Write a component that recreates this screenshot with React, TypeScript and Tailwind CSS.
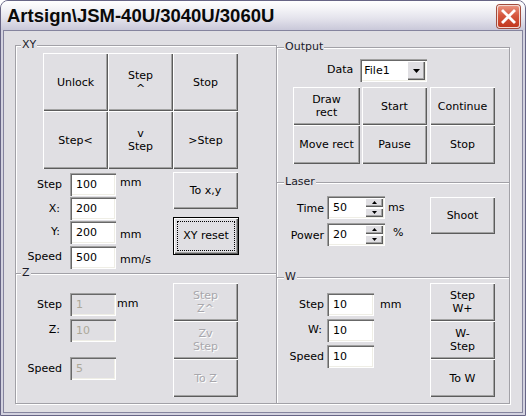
import React from 'react';

const raised =
  'bg-[#e0dfe3] shadow-[inset_1px_1px_0_#ffffff,inset_-1px_-1px_0_#5c5c5c,inset_-2px_-2px_0_#a3a3a3]';
const sunken =
  'shadow-[inset_1px_1px_0_#a0a0a0,inset_2px_2px_0_#686868,inset_-1px_-1px_0_#ffffff,inset_-2px_-2px_0_#efeee6]';

function Btn({
  className,
  children,
  disabled,
}: {
  className: string;
  children: React.ReactNode;
  disabled?: boolean;
}) {
  return (
    <div
      className={`${raised} ${className} flex flex-col items-center justify-center text-center leading-[13px] ${
        disabled ? 'text-[#a8a7ac] [text-shadow:1px_1px_0_#ffffff]' : 'text-black'
      }`}
    >
      {children}
    </div>
  );
}

function Field({ className, value, disabled }: { className: string; value: string; disabled?: boolean }) {
  return (
    <div
      className={`${sunken} ${className} h-[23px] flex items-center pl-[6px] pt-[1px] ${
        disabled ? 'bg-[#e0dfe3] text-[#aca899]' : 'bg-white text-black'
      }`}
    >
      {value}
    </div>
  );
}

function Group({
  label,
  className,
  labelPos,
  children,
}: {
  label: string;
  className: string;
  labelPos: string;
  children: React.ReactNode;
}) {
  return (
    <div
      className={`relative border border-[#a2a1a7] shadow-[inset_1px_1px_0_#ffffff,1px_1px_0_#ffffff] ${className}`}
    >
      <span className={`absolute top-[-8px] ${labelPos} px-[1px] bg-[#e0dfe3] leading-[13px] text-[#1b1b2a]`}>
        {label}
      </span>
      {children}
    </div>
  );
}

function Arrow({ up }: { up?: boolean }) {
  return (
    <svg width="5" height="3" viewBox="0 0 5 3">
      <polygon points={up ? '2.5,0 5,3 0,3' : '0,0 5,0 2.5,3'} fill="#000" />
    </svg>
  );
}

function Spin({ value }: { value: string }) {
  return (
    <div className={`${sunken} bg-white w-[58px] h-[23px] flex`}>
      <span className="flex-1 pl-[6px] pt-[4px]">{value}</span>
      <div className="mt-[2px] mr-[2px] flex flex-col gap-[1px]">
        <div className={`${raised} w-[18px] h-[9px] flex items-center justify-center`}>
          <Arrow up />
        </div>
        <div className={`${raised} w-[18px] h-[9px] flex items-center justify-center`}>
          <Arrow />
        </div>
      </div>
    </div>
  );
}

export default function App() {
  return (
    <div className="w-[526px] h-[416px] bg-white font-['DejaVu_Sans',sans-serif] text-[11px] text-black">
      <div className="w-full h-full rounded-t-[8px] border border-[#676585] bg-[#d3d2df] flex flex-col overflow-hidden">
        {/* title bar */}
        <div className="h-[29px] shrink-0 flex items-center pl-[6px] pr-[5px] bg-[linear-gradient(to_bottom,#ffffff_0%,#f5f5f8_25%,#e4e3ec_60%,#c9c8d9_100%)]">
          <span className="flex-1 font-['Liberation_Sans',Arial,sans-serif] font-bold text-[18.5px] leading-[22px] text-[#0a0a0a] pt-[1px]">
            Artsign\JSM-40U/3040U/3060U
          </span>
          <div className="mt-[2px] w-[23px] h-[23px] rounded-[3px] border border-[#f3d9d2] bg-[linear-gradient(to_bottom,#e9927f_0%,#d6583f_45%,#c2381f_100%)] shadow-[0_0_0_1px_#a24b3c] flex items-center justify-center">
            <svg width="21" height="21" viewBox="0 0 21 21">
              <path d="M5 5 L16 16 M16 5 L5 16" stroke="#ffffff" strokeWidth="2.8" strokeLinecap="square" />
            </svg>
          </div>
        </div>

        {/* client */}
        <div className="flex-1 mx-[2px] mb-[2px] border border-[#85849e] bg-[#e0dfe3] pl-[11px] pt-[14px] flex items-start">
          {/* left column */}
          <div className="w-[262px] flex flex-col">
            <Group label="XY" className="h-[229px]" labelPos="left-[5px]">
              <div className="ml-[27px] mt-[7px] grid grid-cols-[65px_65px_65px] grid-rows-[58px_58px]">
                <Btn className="">Unlock</Btn>
                <Btn className="">
                  <span>Step</span>
                  <span>^</span>
                </Btn>
                <Btn className="">Stop</Btn>
                <Btn className="">Step&lt;</Btn>
                <Btn className="">
                  <span>v</span>
                  <span>Step</span>
                </Btn>
                <Btn className="">&gt;Step</Btn>
              </div>
              <div className="mt-[3px] flex">
                <div className="w-[157px] pt-[1px] flex flex-col">
                  <div className="flex items-center h-[23px]">
                    <span className="w-[46px] text-right pt-[2px]">Step</span>
                    <Field className="ml-[8px] w-[46px]" value="100" />
                    <span className="ml-[4px] mb-[2px]">mm</span>
                  </div>
                  <div className="flex items-center h-[23px] mt-[1px]">
                    <span className="w-[44px] text-right pt-[1px]">X:</span>
                    <Field className="ml-[10px] w-[46px]" value="200" />
                  </div>
                  <div className="flex items-center h-[23px] mt-[1px]">
                    <span className="w-[44px] text-right">Y:</span>
                    <Field className="ml-[10px] w-[46px]" value="200" />
                    <span className="ml-[4px] mt-[6px]">mm</span>
                  </div>
                  <div className="flex items-center h-[23px] mt-[2px]">
                    <span className="w-[46px] text-right">Speed</span>
                    <Field className="ml-[8px] w-[46px]" value="500" />
                    <span className="ml-[4px] mt-[5px]">mm/s</span>
                  </div>
                </div>
                <div className="flex flex-col">
                  <Btn className="w-[65px] h-[37px]">To x,y</Btn>
                  <div className="mt-[8px] w-[66px] h-[38px] border border-black">
                    <div className={`${raised} w-full h-full p-[3px] flex`}>
                      <div className="flex-1 border border-dotted border-black flex items-center justify-center">
                        XY reset
                      </div>
                    </div>
                  </div>
                </div>
              </div>
            </Group>

            <Group label="Z" className="-mt-px h-[131px]" labelPos="left-[5px]">
              <div className="flex">
                <div className="w-[157px] pt-[19px] flex flex-col">
                  <div className="flex items-center h-[23px]">
                    <span className="w-[46px] text-right pt-[2px]">Step</span>
                    <Field className="ml-[8px] w-[46px]" value="1" disabled />
                    <span className="ml-[1px] mb-[1px]">mm</span>
                  </div>
                  <div className="flex items-center h-[23px] mt-[3px]">
                    <span className="w-[44px] text-right">Z:</span>
                    <Field className="ml-[10px] w-[46px]" value="10" disabled />
                  </div>
                  <div className="flex items-center h-[23px] mt-[15px]">
                    <span className="w-[46px] text-right pt-[2px]">Speed</span>
                    <Field className="ml-[8px] w-[46px]" value="5" disabled />
                  </div>
                </div>
                <div className="mt-[9px] flex flex-col">
                  <Btn className="w-[65px] h-[38px]" disabled>
                    <span>Step</span>
                    <span>Z^</span>
                  </Btn>
                  <Btn className="w-[65px] h-[38px]" disabled>
                    <span>Zv</span>
                    <span>Step</span>
                  </Btn>
                  <Btn className="w-[65px] h-[38px]" disabled>
                    To Z
                  </Btn>
                </div>
              </div>
            </Group>
          </div>

          {/* right column */}
          <div className="-ml-px mt-[2px] w-[234px] flex flex-col">
            <Group label="Output" className="h-[136px]" labelPos="left-[7px]">
              <div className="mt-[11px] flex items-center">
                <span className="ml-[50px]">Data</span>
                <div className={`${sunken} ml-[7px] bg-white w-[67px] h-[23px] flex items-center`}>
                  <span className="flex-1 pl-[4px] pt-[1px]">File1</span>
                  <div className={`${raised} mr-[2px] w-[18px] h-[19px] flex items-center justify-center`}>
                    <svg width="7" height="4" viewBox="0 0 7 4">
                      <polygon points="0,0 7,0 3.5,4" fill="#000" />
                    </svg>
                  </div>
                </div>
              </div>
              <div className="ml-[16px] mt-[5px] flex">
                <Btn className="w-[67px] h-[38px]">
                  <span>Draw</span>
                  <span>rect</span>
                </Btn>
                <Btn className="ml-[2px] w-[65px] h-[38px]">Start</Btn>
                <Btn className="ml-[3px] w-[65px] h-[38px]">Continue</Btn>
              </div>
              <div className="ml-[16px] flex">
                <Btn className="w-[67px] h-[39px]">Move rect</Btn>
                <Btn className="ml-[2px] w-[65px] h-[39px]">Pause</Btn>
                <Btn className="ml-[3px] w-[65px] h-[39px]">Stop</Btn>
              </div>
            </Group>

            <Group label="Laser" className="-mt-px h-[96px]" labelPos="left-[7px]">
              <div className="flex">
                <div className="w-[153px] pt-[13px] flex flex-col">
                  <div className="flex items-center h-[23px]">
                    <span className="w-[47px] text-right pt-[3px]">Time</span>
                    <div className="ml-[3px]">
                      <Spin value="50" />
                    </div>
                    <span className="ml-[3px] pt-[2px]">ms</span>
                  </div>
                  <div className="flex items-center h-[23px] mt-[4px]">
                    <span className="w-[47px] text-right pt-[4px]">Power</span>
                    <div className="ml-[3px]">
                      <Spin value="20" />
                    </div>
                    <span className="ml-[8px] mb-[2px]">%</span>
                  </div>
                </div>
                <Btn className="mt-[14px] w-[65px] h-[37px]">Shoot</Btn>
              </div>
            </Group>

            <Group label="W" className="-mt-px h-[127px]" labelPos="left-[7px]">
              <div className="flex">
                <div className="w-[153px] pt-[15px] flex flex-col">
                  <div className="flex items-center h-[23px]">
                    <span className="w-[47px] text-right pt-[1px]">Step</span>
                    <Field className="ml-[3px] w-[47px]" value="10" />
                    <span className="ml-[6px] pt-[1px]">mm</span>
                  </div>
                  <div className="flex items-center h-[23px] mt-[3px]">
                    <span className="w-[45px] text-right">W:</span>
                    <Field className="ml-[5px] w-[47px]" value="10" />
                  </div>
                  <div className="flex items-center h-[23px] mt-[3px]">
                    <span className="w-[47px] text-right pt-[1px]">Speed</span>
                    <Field className="ml-[3px] w-[47px]" value="10" />
                  </div>
                </div>
                <div className="mt-[5px] flex flex-col">
                  <Btn className="w-[65px] h-[38px]">
                    <span>Step</span>
                    <span>W+</span>
                  </Btn>
                  <Btn className="w-[65px] h-[38px]">
                    <span>W-</span>
                    <span>Step</span>
                  </Btn>
                  <Btn className="w-[65px] h-[38px]">To W</Btn>
                </div>
              </div>
            </Group>
          </div>
        </div>
      </div>
    </div>
  );
}
